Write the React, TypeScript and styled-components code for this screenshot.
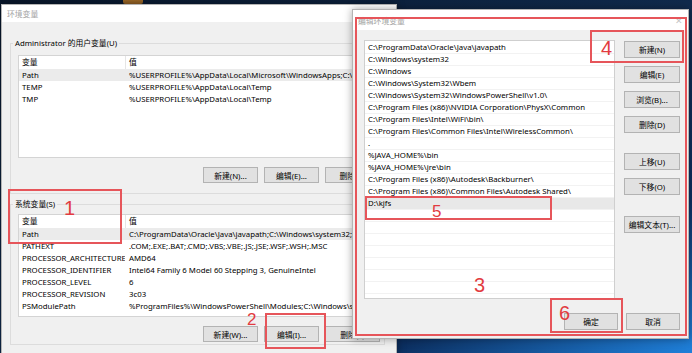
import styled, { createGlobalStyle } from "styled-components";

const GlobalStyle = createGlobalStyle`
  html, body {
    margin: 0;
    padding: 0;
  }
  body {
    width: 692px;
    height: 353px;
    overflow: hidden;
    font-family: "Noto Sans", "Noto Sans CJK SC", sans-serif;
    font-size: 7.8px;
    color: #000;
  }
`;

const Desktop = styled.div`
  position: relative;
  width: 692px;
  height: 353px;
  overflow: hidden;
  background: linear-gradient(
    to bottom right,
    #08162a 0%,
    #102a4c 50%,
    #0c2f60 78%,
    #1f80da 100%
  );
`;

const DesktopIcon = styled.div`
  position: absolute;
  left: 123px;
  top: -14px;
  width: 20px;
  height: 18px;
  border-radius: 2px;
  background: linear-gradient(#d49a3a, #8a5a22);
`;

const Window = styled.section<{ $x: number; $y: number; $w: number; $h: number }>`
  position: absolute;
  left: ${(p) => p.$x}px;
  top: ${(p) => p.$y}px;
  width: ${(p) => p.$w}px;
  height: ${(p) => p.$h}px;
  box-sizing: border-box;
  display: flex;
  flex-direction: column;
  background: #f0f0f0;
  border: 1px solid #b4b4b4;
  box-shadow: 0 0 8px rgba(0, 0, 0, 0.35);
`;

const TitleBar = styled.div<{ $h: number }>`
  flex: none;
  height: ${(p) => p.$h}px;
  display: flex;
  align-items: center;
  justify-content: space-between;
  padding: 0 5px;
  background: #fff;
  color: #a3a3a3;
`;

const Close = styled.span`
  color: #c4c4c4;
  font-size: 9px;
`;

const LeftBody = styled.div`
  display: flex;
  flex-direction: column;
  padding: 15px 11px 0 8px;
`;

const Group = styled.fieldset<{ $second?: boolean }>`
  margin: ${(p) => (p.$second ? "4px 0 0" : "0")};
  min-width: 0;
  border: 1px solid #dcdcdc;
  padding: ${(p) => (p.$second ? "4px 4px 2px 7px" : "6px 4px 10px 7px")};
`;

const Legend = styled.legend`
  margin-left: -5px;
  padding: 0 2px;
  line-height: 12px;
`;

const VarList = styled.div`
  height: 103px;
  box-sizing: border-box;
  background: #fff;
  border: 1px solid #d4d4d4;
  overflow: hidden;
`;

const VarRow = styled.div<{ $head?: boolean; $selected?: boolean }>`
  display: grid;
  grid-template-columns: 107px 1fr;
  height: ${(p) => (p.$head ? 13 : 12)}px;
  line-height: ${(p) => (p.$head ? 13 : 12)}px;
  background: ${(p) => (p.$selected ? "#ebebeb" : "#fff")};
  white-space: nowrap;
`;

const NameCell = styled.span<{ $head?: boolean }>`
  padding: 0 3px;
  overflow: hidden;
  border-right: 1px solid ${(p) => (p.$head ? "#e5e5e5" : "transparent")};
`;

const ValueCell = styled.span`
  padding: 0 3px;
  overflow: hidden;
`;

const ButtonRow = styled.div<{ $gap: number }>`
  display: flex;
  justify-content: flex-end;
  gap: 6px;
  margin-top: ${(p) => p.$gap}px;
`;

const Button = styled.button<{ $w: number; $h?: number; $mt?: number }>`
  flex: none;
  width: ${(p) => p.$w}px;
  height: ${(p) => p.$h ?? 16}px;
  margin-top: ${(p) => p.$mt ?? 0}px;
  box-sizing: border-box;
  padding: 0;
  background: #e1e1e1;
  border: 1px solid #b3b3b3;
  font-family: inherit;
  font-size: 7.8px;
  color: #000;
  white-space: nowrap;
`;

const EditBody = styled.div`
  display: flex;
  flex-direction: column;
  padding: 10px 8px 0 11px;
`;

const EditMain = styled.div`
  display: grid;
  grid-template-columns: 251px 56px;
  gap: 9px;
`;

const PathList = styled.div`
  height: 259px;
  box-sizing: border-box;
  padding-top: 1px;
  background: #fff;
  border: 1px solid #cfcfcf;
  overflow: hidden;
`;

const PathRow = styled.div<{ $selected?: boolean }>`
  height: 12px;
  box-sizing: border-box;
  padding-left: 3px;
  line-height: 11px;
  border-bottom: 1px solid #f2f2f2;
  background: ${(p) => (p.$selected ? "#e8e8e8" : "#fff")};
  white-space: nowrap;
`;

const SideButtons = styled.div`
  display: flex;
  flex-direction: column;
`;

const Footer = styled.div`
  display: flex;
  justify-content: flex-end;
  gap: 8px;
  margin-top: 14px;
`;

const Mark = styled.div<{ $x: number; $y: number; $w: number; $h: number }>`
  position: absolute;
  left: ${(p) => p.$x}px;
  top: ${(p) => p.$y}px;
  width: ${(p) => p.$w}px;
  height: ${(p) => p.$h}px;
  box-sizing: border-box;
  border: 2px solid #e6555a;
  pointer-events: none;
`;

const Num = styled.span<{ $x: number; $y: number; $size: number }>`
  position: absolute;
  left: ${(p) => p.$x}px;
  top: ${(p) => p.$y}px;
  font-family: "Liberation Sans", sans-serif;
  font-size: ${(p) => p.$size}px;
  line-height: ${(p) => p.$size}px;
  color: #e23b40;
`;

const userVars = [
  ["Path", "%USERPROFILE%\\AppData\\Local\\Microsoft\\WindowsApps;C:\\Users\\Administrator"],
  ["TEMP", "%USERPROFILE%\\AppData\\Local\\Temp"],
  ["TMP", "%USERPROFILE%\\AppData\\Local\\Temp"],
];

const systemVars = [
  ["Path", "C:\\ProgramData\\Oracle\\Java\\javapath;C:\\Windows\\system32;C:\\Windows;"],
  ["PATHEXT", ".COM;.EXE;.BAT;.CMD;.VBS;.VBE;.JS;.JSE;.WSF;.WSH;.MSC"],
  ["PROCESSOR_ARCHITECTURE", "AMD64"],
  ["PROCESSOR_IDENTIFIER", "Intel64 Family 6 Model 60 Stepping 3, GenuineIntel"],
  ["PROCESSOR_LEVEL", "6"],
  ["PROCESSOR_REVISION", "3c03"],
  ["PSModulePath", "%ProgramFiles%\\WindowsPowerShell\\Modules;C:\\Windows\\system32\\"],
  ["TEMP", "C:\\Windows\\TEMP"],
];

const paths = [
  "C:\\ProgramData\\Oracle\\Java\\javapath",
  "C:\\Windows\\system32",
  "C:\\Windows",
  "C:\\Windows\\System32\\Wbem",
  "C:\\Windows\\System32\\WindowsPowerShell\\v1.0\\",
  "C:\\Program Files (x86)\\NVIDIA Corporation\\PhysX\\Common",
  "C:\\Program Files\\Intel\\WiFi\\bin\\",
  "C:\\Program Files\\Common Files\\Intel\\WirelessCommon\\",
  ".",
  "%JAVA_HOME%\\bin",
  "%JAVA_HOME%\\jre\\bin",
  "C:\\Program Files (x86)\\Autodesk\\Backburner\\",
  "C:\\Program Files (x86)\\Common Files\\Autodesk Shared\\",
  "D:\\kjfs",
];

// [label, margin-top]
const sideButtons: [string, number][] = [
  ["新建(N)", 1],
  ["编辑(E)", 8],
  ["浏览(B)...", 8],
  ["删除(D)", 8],
  ["上移(U)", 20],
  ["下移(O)", 8],
  ["编辑文本(T)...", 21],
];

function VarTable({ rows }: { rows: string[][] }) {
  return (
    <VarList>
      <VarRow $head>
        <NameCell $head>变量</NameCell>
        <ValueCell>值</ValueCell>
      </VarRow>
      {rows.map(([name, value], i) => (
        <VarRow key={name + i} $selected={i === 0}>
          <NameCell>{name}</NameCell>
          <ValueCell>{value}</ValueCell>
        </VarRow>
      ))}
    </VarList>
  );
}

export default function App() {
  return (
    <>
      <GlobalStyle />
      <Desktop>
        <DesktopIcon />

        <Window $x={1} $y={4} $w={396} $h={360}>
          <TitleBar $h={17}>环境变量</TitleBar>
          <LeftBody>
            <Group>
              <Legend>Administrator 的用户变量(U)</Legend>
              <VarTable rows={userVars} />
              <ButtonRow $gap={9}>
                <Button $w={55}>新建(N)...</Button>
                <Button $w={55}>编辑(E)...</Button>
                <Button $w={55}>删除(D)</Button>
              </ButtonRow>
            </Group>
            <Group $second>
              <Legend>系统变量(S)</Legend>
              <VarTable rows={systemVars} />
              <ButtonRow $gap={9}>
                <Button $w={55}>新建(W)...</Button>
                <Button $w={55}>编辑(I)...</Button>
                <Button $w={55}>删除(L)</Button>
              </ButtonRow>
            </Group>
          </LeftBody>
        </Window>

        <Window $x={352} $y={9} $w={337} $h={330}>
          <TitleBar $h={20}>
            编辑环境变量
            <Close>✕</Close>
          </TitleBar>
          <EditBody>
            <EditMain>
              <PathList>
                {paths.map((p, i) => (
                  <PathRow key={p + i} $selected={i === paths.length - 1}>
                    {p}
                  </PathRow>
                ))}
                {Array.from({ length: 8 }).map((_, i) => (
                  <PathRow key={"empty" + i} />
                ))}
              </PathList>
              <SideButtons>
                {sideButtons.map(([label, mt]) => (
                  <Button key={label} $w={56} $h={17} $mt={mt}>
                    {label}
                  </Button>
                ))}
              </SideButtons>
            </EditMain>
            <Footer>
              <Button $w={54} $h={17}>确定</Button>
              <Button $w={54} $h={17}>取消</Button>
            </Footer>
          </EditBody>
        </Window>

        <Mark $x={8} $y={189} $w={114} $h={55} />
        <Num $x={64} $y={198} $size={20}>1</Num>
        <Mark $x={265} $y={313} $w={61} $h={36} />
        <Num $x={247} $y={311} $size={17}>2</Num>
        <Mark $x={355} $y={17} $w={332} $h={319} />
        <Num $x={474} $y={275} $size={20}>3</Num>
        <Mark $x={590} $y={30} $w={94} $h={33} />
        <Num $x={601} $y={38} $size={20}>4</Num>
        <Mark $x={365} $y={196} $w={187} $h={24} />
        <Num $x={432} $y={203} $size={17}>5</Num>
        <Mark $x={550} $y={298} $w={73} $h={35} />
        <Num $x={559} $y={303} $size={20}>6</Num>
      </Desktop>
    </>
  );
}
